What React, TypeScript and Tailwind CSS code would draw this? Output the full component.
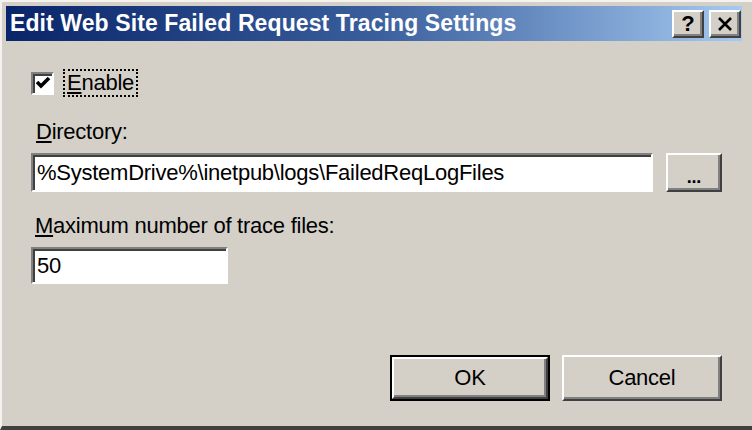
const raised =
  'border-2 border-t-white border-l-white border-r-[#404040] border-b-[#404040] shadow-[inset_-2px_-2px_0_#808080]';
const sunken =
  'border-2 border-t-[#808080] border-l-[#808080] border-r-white border-b-white shadow-[inset_2px_2px_0_#404040] bg-white';

function Check() {
  return (
    <svg width="16" height="14" viewBox="0 0 16 14">
      <path d="M2 6 L6 10 L14 2" stroke="#000" strokeWidth="3.6" fill="none" />
    </svg>
  );
}

export default function App() {
  return (
    <div
      className="w-[752px] h-[430px] overflow-hidden bg-[#d4d0c8] text-black flex flex-col pt-[6px] pl-[6px] border-t-[2px] border-l-[2px] border-t-[#f4f3f0] border-l-[#f4f3f0] border-b-[4px] border-b-[#404040]"
      style={{ fontFamily: '"Liberation Sans", Arial, sans-serif' }}
    >
      {/* title bar */}
      <div className="h-[35px] mr-[10px] -mt-[2px] -ml-[2px] flex items-center bg-gradient-to-r from-[#0a246a] via-[#3a5e9c] to-[#a6caf0] pl-[4px] pr-[1px]">
        <span className="text-white font-bold text-[23px] tracking-[0.1px] leading-none">
          Edit Web Site Failed Request Tracing Settings
        </span>
        <div className="ml-auto flex gap-[5px]">
          <div
            className={`w-[32px] h-[28px] bg-[#d4d0c8] flex items-center justify-center font-bold text-[22px] leading-none ${raised}`}
          >
            ?
          </div>
          <div
            className={`w-[32px] h-[28px] bg-[#d4d0c8] flex items-center justify-center ${raised}`}
          >
            <svg width="16" height="14" viewBox="0 0 16 14">
              <path d="M2 1 L14 13 M14 1 L2 13" stroke="#000" strokeWidth="2.6" />
            </svg>
          </div>
        </div>
      </div>

      {/* body */}
      <div className="flex flex-col pl-[23px] pr-[30px] text-[22px] leading-[26px] tracking-[-0.25px]">
        <div className="mt-[28px] flex items-center">
          <div className={`w-[23px] h-[23px] flex items-center justify-center ${sunken}`}>
            <Check />
          </div>
          <div className="ml-[9px] px-[2px] h-[28px] flex items-center border-2 border-dotted border-black">
            <span>
              <u>E</u>nable
            </span>
          </div>
        </div>

        <div className="mt-[22px] ml-[5px]">
          <u>D</u>irectory:
        </div>
        <div className="mt-[8px] flex items-center">
          <div className={`w-[622px] h-[39px] flex items-center pl-[4px] ${sunken}`}>
            %SystemDrive%\inetpub\logs\FailedReqLogFiles
          </div>
          <div
            className={`ml-[13px] w-[56px] h-[39px] flex items-center justify-center bg-[#d4d0c8] ${raised}`}
          >
            <span className="text-[18px] font-bold leading-none pt-[8px]">...</span>
          </div>
        </div>

        <div className="mt-[21px] ml-[4px]">
          <u>M</u>aximum number of trace files:
        </div>
        <div className={`mt-[8px] w-[197px] h-[37px] flex items-center pl-[4px] ${sunken}`}>
          50
        </div>

        <div className="mt-[71px] flex justify-end gap-[12px]">
          <div className="w-[160px] h-[46px] border-2 border-black">
            <div className={`w-full h-full flex items-center justify-center bg-[#d4d0c8] ${raised}`}>
              OK
            </div>
          </div>
          <div
            className={`w-[160px] h-[46px] flex items-center justify-center bg-[#d4d0c8] ${raised}`}
          >
            Cancel
          </div>
        </div>
      </div>
    </div>
  );
}
